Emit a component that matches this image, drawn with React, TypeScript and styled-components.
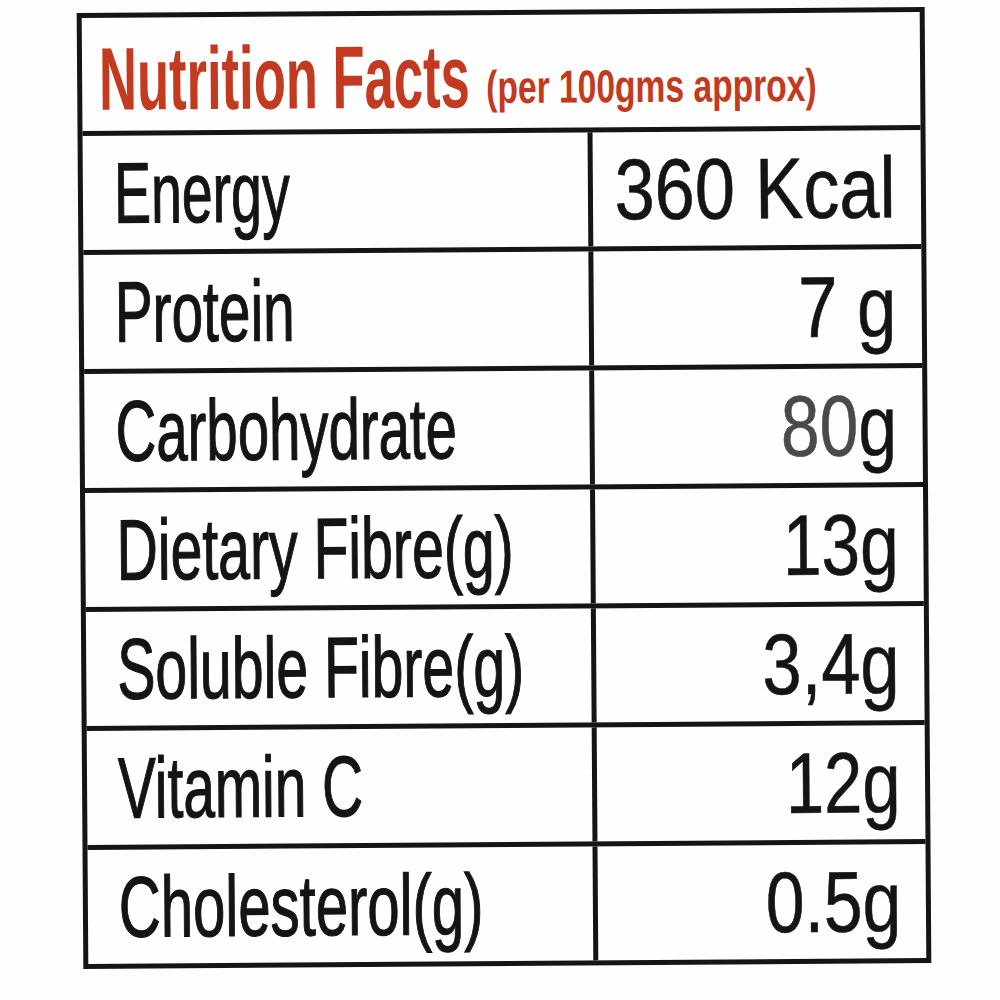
import React from "react";
import styled, { createGlobalStyle } from "styled-components";

const GlobalStyle = createGlobalStyle`
  html, body {
    margin: 0;
    padding: 0;
    background: #fdfdfc;
  }
  body {
    font-family: "Liberation Sans", Arial, sans-serif;
    color: #141414;
  }
`;

const Page = styled.div`
  width: 1000px;
  height: 1000px;
  padding: 10px 0 0 80px;
  box-sizing: border-box;
  overflow: hidden;
`;

const Table = styled.div`
  width: 848px;
  box-sizing: border-box;
  border: 5px solid #151515;
  background: #fefefe;
  display: flex;
  flex-direction: column;
  transform: rotate(-0.4deg);
  transform-origin: center;
`;

const Header = styled.div`
  height: 118px;
  border-bottom: 5px solid #151515;
  padding: 17px 0 0 17px;
  box-sizing: border-box;
  white-space: nowrap;
  line-height: 1;
  color: #c23a20;
  font-family: "Liberation Sans", Arial, sans-serif;
  font-weight: 700;
`;

const Title = styled.span`
  display: inline-block;
  width: 387px;
  font-size: 89px;
  transform: scaleX(0.59);
  transform-origin: left center;
  vertical-align: baseline;
`;

const Subtitle = styled.span`
  display: inline-block;
  font-size: 46px;
  transform: scaleX(0.73);
  transform-origin: left center;
  vertical-align: 4px;
`;

const Row = styled.div<{ $last?: boolean }>`
  display: grid;
  grid-template-columns: 505px 5px minmax(0, 1fr);
  height: ${(p) => (p.$last ? "114px" : "119px")};
  border-bottom: ${(p) => (p.$last ? "none" : "5px solid #151515")};
  box-sizing: border-box;
`;

const Divider = styled.div`
  background: #151515;
`;

const LabelCell = styled.div`
  display: flex;
  align-items: center;
  padding-left: 31px;
  min-width: 0;
  white-space: nowrap;
`;

const Label = styled.span<{ $squeeze: number }>`
  display: inline-block;
  flex-shrink: 0;
  font-size: 86px;
  line-height: 1;
  -webkit-text-stroke: 1.2px #141414;
  transform: scaleX(${(p) => p.$squeeze});
  transform-origin: left center;
`;

const ValueCell = styled.div`
  display: flex;
  align-items: center;
  justify-content: flex-end;
  padding-right: 25px;
  min-width: 0;
  white-space: nowrap;
`;

const Value = styled.span<{ $squeeze: number }>`
  display: inline-block;
  flex-shrink: 0;
  font-size: 86px;
  line-height: 1;
  -webkit-text-stroke: 0.6px currentColor;
  transform: scaleX(${(p) => p.$squeeze});
  transform-origin: right center;
`;

const Faded = styled.span`
  color: #4a4a4a;
`;

type Item = {
  label: string;
  squeeze: number;
  value: React.ReactNode;
  valueSqueeze: number;
};

const items: Item[] = [
  { label: "Energy", squeeze: 0.645, value: "360 Kcal", valueSqueeze: 0.84 },
  { label: "Protein", squeeze: 0.66, value: "7 g", valueSqueeze: 0.82 },
  {
    label: "Carbohydrate",
    squeeze: 0.655,
    value: (
      <>
        <Faded>80</Faded>g
      </>
    ),
    valueSqueeze: 0.81,
  },
  { label: "Dietary Fibre(g)", squeeze: 0.665, value: "13g", valueSqueeze: 0.81 },
  { label: "Soluble Fibre(g)", squeeze: 0.665, value: "3,4g", valueSqueeze: 0.82 },
  { label: "Vitamin C", squeeze: 0.66, value: "12g", valueSqueeze: 0.8 },
  { label: "Cholesterol(g)", squeeze: 0.675, value: "0.5g", valueSqueeze: 0.81 },
];

export default function App() {
  return (
    <>
      <GlobalStyle />
      <Page>
        <Table>
          <Header>
            <Title>Nutrition Facts</Title>
            <Subtitle>(per 100gms approx)</Subtitle>
          </Header>
          {items.map((it, i) => (
            <Row key={it.label} $last={i === items.length - 1}>
              <LabelCell>
                <Label $squeeze={it.squeeze}>{it.label}</Label>
              </LabelCell>
              <Divider />
              <ValueCell>
                <Value $squeeze={it.valueSqueeze}>{it.value}</Value>
              </ValueCell>
            </Row>
          ))}
        </Table>
      </Page>
    </>
  );
}
